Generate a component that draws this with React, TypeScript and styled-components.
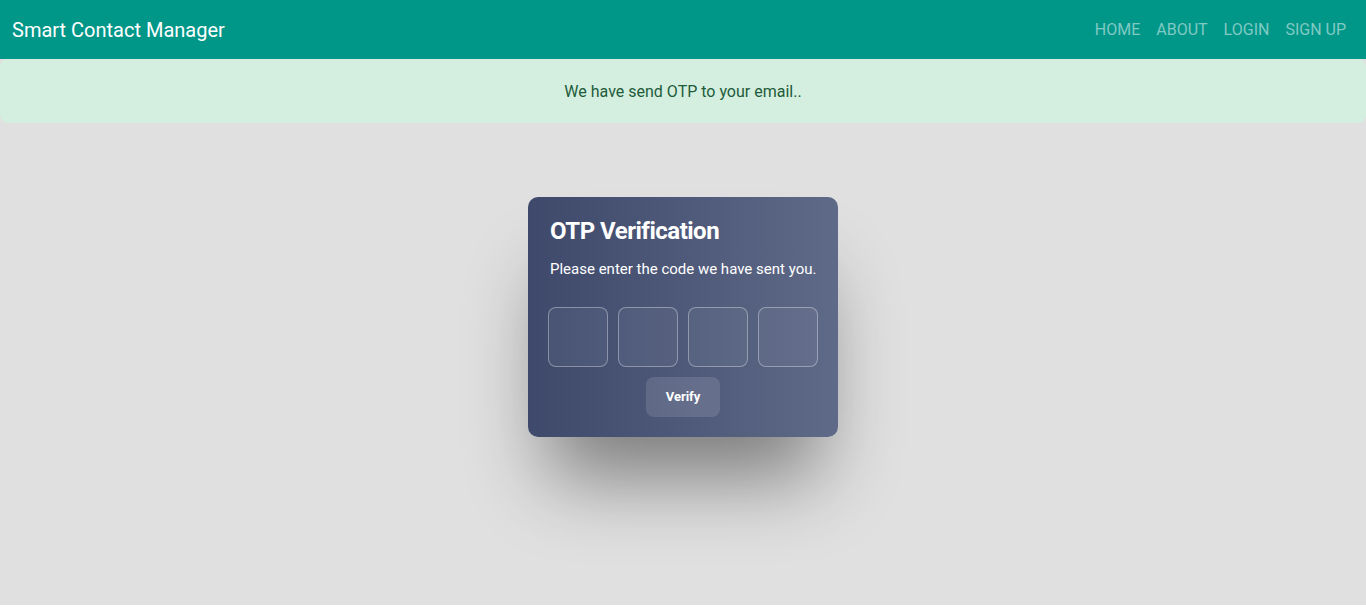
import React from "react";
import styled, { createGlobalStyle } from "styled-components";

const GlobalStyle = createGlobalStyle`
  html { background: #ffffff; }
  body {
    margin: 0;
    font-family: Roboto, "Liberation Sans", Arial, sans-serif;
  }
  * { box-sizing: border-box; }
`;

const Page = styled.div`
  min-height: 605px;
  background: #e0e0e0;
  display: flex;
  flex-direction: column;
`;

const NavBar = styled.nav`
  height: 59px;
  background: #009688;
  display: flex;
  align-items: center;
  justify-content: space-between;
  padding: 0 12px;
`;

const Brand = styled.a`
  color: #ffffff;
  font-size: 20px;
  line-height: 24px;
  text-decoration: none;
  margin-top: 1px;
`;

const NavLinks = styled.ul`
  list-style: none;
  margin: 0;
  padding: 0;
  display: flex;
  align-items: center;
`;

const NavLink = styled.li`
  color: rgba(255, 255, 255, 0.5);
  font-size: 16px;
  line-height: 24px;
  text-transform: uppercase;
  padding: 0 8px;
`;

const Alert = styled.div`
  height: 64px;
  padding-top: 2px;
  background: #d4efdf;
  color: #1e5b3a;
  border-radius: 8px;
  display: flex;
  align-items: center;
  justify-content: center;
  font-size: 16px;
  line-height: 24px;
`;

const Main = styled.main`
  display: flex;
  justify-content: center;
  padding-top: 74px;
`;

const Card = styled.section`
  width: 310px;
  padding: 20px;
  border-radius: 10px;
  background: linear-gradient(to right, #3e496b, #5f6a88);
  box-shadow: 0 60px 80px -20px rgba(0, 0, 0, 0.45);
  color: #ffffff;
  display: flex;
  flex-direction: column;
`;

const Title = styled.h2`
  margin: 0;
  font-size: 24px;
  line-height: 28px;
  font-weight: 700;
  letter-spacing: -0.5px;
  padding-left: 2px;
`;

const Subtitle = styled.p`
  margin: 15px 0 0;
  font-size: 15px;
  line-height: 18px;
  padding-left: 2px;
`;

const Inputs = styled.div`
  margin-top: 29px;
  display: flex;
  gap: 10px;
`;

const CodeInput = styled.input`
  width: 60px;
  height: 60px;
  border-radius: 8px;
  border: 1px solid rgba(255, 255, 255, 0.35);
  background: rgba(255, 255, 255, 0.05);
  color: #ffffff;
  font-size: 24px;
  text-align: center;
  outline: none;
  padding: 0;
`;

const VerifyButton = styled.button`
  align-self: center;
  margin-top: 10px;
  width: 74px;
  height: 40px;
  padding: 0 0 2px;
  border: none;
  border-radius: 8px;
  background: rgba(255, 255, 255, 0.12);
  color: #ffffff;
  font-family: Roboto, "Liberation Sans", Arial, sans-serif;
  font-size: 13px;
  font-weight: 700;
  cursor: pointer;
`;

export default function App() {
  return (
    <>
      <GlobalStyle />
      <Page>
        <NavBar>
          <Brand href="#">Smart Contact Manager</Brand>
          <NavLinks>
            <NavLink>Home</NavLink>
            <NavLink>About</NavLink>
            <NavLink>Login</NavLink>
            <NavLink>Sign Up</NavLink>
          </NavLinks>
        </NavBar>
        <Alert>We have send OTP to your email..</Alert>
        <Main>
          <Card>
            <Title>OTP Verification</Title>
            <Subtitle>Please enter the code we have sent you.</Subtitle>
            <Inputs>
              <CodeInput maxLength={1} />
              <CodeInput maxLength={1} />
              <CodeInput maxLength={1} />
              <CodeInput maxLength={1} />
            </Inputs>
            <VerifyButton>Verify</VerifyButton>
          </Card>
        </Main>
      </Page>
    </>
  );
}
